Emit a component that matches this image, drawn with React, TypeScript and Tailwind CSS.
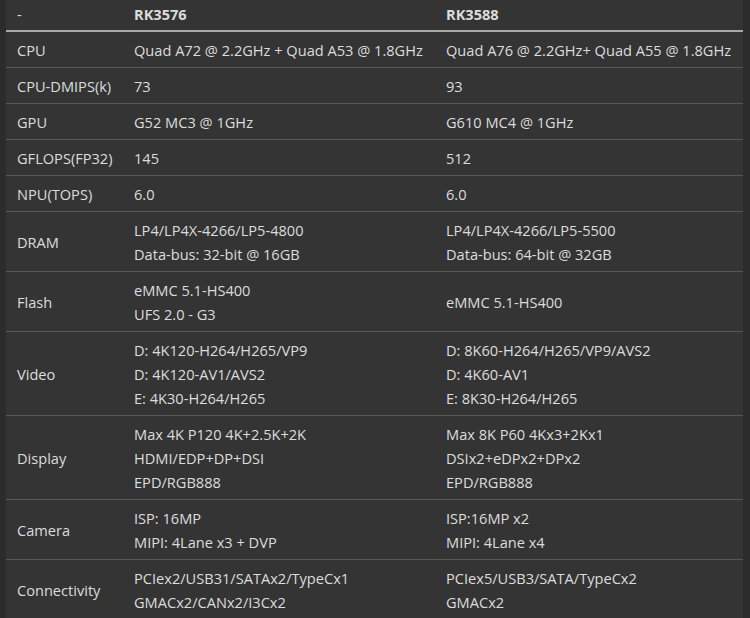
import React from "react";

const rows: [string, string[], string[]][] = [
  ["CPU", ["Quad A72 @ 2.2GHz + Quad A53 @ 1.8GHz"], ["Quad A76 @ 2.2GHz+ Quad A55 @ 1.8GHz"]],
  ["CPU-DMIPS(k)", ["73"], ["93"]],
  ["GPU", ["G52 MC3 @ 1GHz"], ["G610 MC4 @ 1GHz"]],
  ["GFLOPS(FP32)", ["145"], ["512"]],
  ["NPU(TOPS)", ["6.0"], ["6.0"]],
  ["DRAM", ["LP4/LP4X-4266/LP5-4800", "Data-bus: 32-bit @ 16GB"], ["LP4/LP4X-4266/LP5-5500", "Data-bus: 64-bit @ 32GB"]],
  ["Flash", ["eMMC 5.1-HS400", "UFS 2.0 - G3"], ["eMMC 5.1-HS400"]],
  ["Video", ["D: 4K120-H264/H265/VP9", "D: 4K120-AV1/AVS2", "E: 4K30-H264/H265"], ["D: 8K60-H264/H265/VP9/AVS2", "D: 4K60-AV1", "E: 8K30-H264/H265"]],
  ["Display", ["Max 4K P120 4K+2.5K+2K", "HDMI/EDP+DP+DSI", "EPD/RGB888"], ["Max 8K P60 4Kx3+2Kx1", "DSIx2+eDPx2+DPx2", "EPD/RGB888"]],
  ["Camera", ["ISP: 16MP", "MIPI: 4Lane x3 + DVP"], ["ISP:16MP x2", "MIPI: 4Lane x4"]],
  ["Connectivity", ["PCIex2/USB31/SATAx2/TypeCx1", "GMACx2/CANx2/I3Cx2"], ["PCIex5/USB3/SATA/TypeCx2", "GMACx2"]],
];

export default function App() {
  return (
    <div className="w-[750px] h-[618px] overflow-hidden bg-[#2c2c2c] pl-[6px] pr-[7px]" style={{ fontFamily: '"Open Sans", "Noto Sans", sans-serif' }}>
      <table className="w-full border-collapse bg-[#343434] text-[14.6px] leading-[24px] text-[#dcdcdc]">
        <thead>
          <tr className="border-b-2 border-[#a8a8a8]">
            <th className="w-[118px] px-[11px] pt-[2px] pb-[4px] text-left font-normal">-</th>
            <th className="w-[312px] px-[10px] pt-[2px] pb-[4px] text-left font-bold">RK3576</th>
            <th className="px-[10px] pt-[2px] pb-[4px] text-left font-bold">RK3588</th>
          </tr>
        </thead>
        <tbody>
          {rows.map(([name, a, b]) => (
            <tr key={name} className="border-b border-[#575757] last:border-b-0">
              <td className="px-[11px] pt-[6px] pb-[5px] align-middle whitespace-nowrap">{name}</td>
              <td className="px-[10px] pt-[6px] pb-[5px] align-middle whitespace-nowrap">
                {a.map((line) => (
                  <div key={line}>{line}</div>
                ))}
              </td>
              <td className="px-[10px] pt-[6px] pb-[5px] align-middle whitespace-nowrap">
                {b.map((line) => (
                  <div key={line}>{line}</div>
                ))}
              </td>
            </tr>
          ))}
        </tbody>
      </table>
    </div>
  );
}
